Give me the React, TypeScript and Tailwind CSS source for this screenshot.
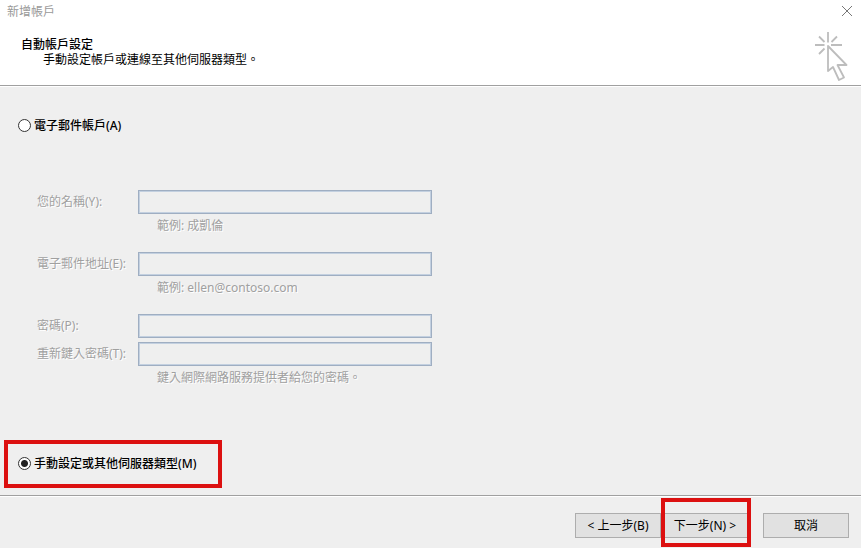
import React from 'react';

const fields = [
  { id: 'name', label: '您的名稱(Y):', type: 'text', hint: '範例: 成凱倫', gap: 'mb-[14px]' },
  { id: 'email', label: '電子郵件地址(E):', type: 'email', hint: '範例: ellen@contoso.com', gap: 'mb-[14px]' },
  { id: 'password', label: '密碼(P):', type: 'password', hint: '', gap: 'mb-1' },
  { id: 'confirm', label: '重新鍵入密碼(T):', type: 'password', hint: '鍵入網際網路服務提供者給您的密碼。', gap: '' },
];

const radioClass =
  'h-[13px] w-[13px] appearance-none rounded-full border border-[#333] bg-white checked:bg-[radial-gradient(circle,#222_0_3px,#fff_4px)]';

const buttonClass =
  'h-[25px] w-[86px] border border-[#adadad] bg-[#e1e1e1] text-xs text-black hover:border-[#0078d7] hover:bg-[#e5f1fb]';

function WizardIcon() {
  return (
    <svg width="34" height="50" viewBox="0 0 34 50" fill="none" stroke="#bdbdbd" strokeWidth="1.8" aria-hidden="true">
      <path d="M13 0v10.500M0 13h9.500M16 13h11M4 4.500l5.500 5.500M22 4.500l-5.500 5.500M4 22l5.500-5.500" />
      <path d="M13 14v25l5-4 6 13 5-2.500-6.500-12.500h9z" strokeLinejoin="round" />
    </svg>
  );
}

function Highlight({ className }: { className: string }) {
  return <span className={`pointer-events-none absolute border-4 border-[#dc1010] ${className}`} />;
}

function Header() {
  return (
    <header className="border-b border-[#a0a0a0] bg-white">
      <div className="flex h-[22px] items-center justify-between pl-[7px] pr-2">
        <span className="pt-px leading-4 text-[#999]">新增帳戶</span>
        <button type="button" aria-label="關閉" className="text-[#777]">
          <svg width="12" height="12" viewBox="0 0 12 12" fill="none" stroke="currentColor">
            <path d="M1 1l10 10M11 1L1 11" />
          </svg>
        </button>
      </div>
      <div className="flex h-[63px] items-start justify-between pl-[21px] pr-3 pt-[10px]">
        <div className="pt-[5px] leading-[15px]">
          <h1 className="font-medium">自動帳戶設定</h1>
          <p className="pl-[22px]">手動設定帳戶或連線至其他伺服器類型。</p>
        </div>
        <WizardIcon />
      </div>
    </header>
  );
}

function AccountFields() {
  return (
    <div className="mt-[55px] pl-[19px] text-[#a0a0a0] [text-shadow:1px_1px_0_#fff]">
      {fields.map((field) => (
        <div key={field.id} className={field.gap}>
          <div className="flex items-center">
            <label htmlFor={field.id} className="w-[101px] shrink-0">
              {field.label}
            </label>
            <input
              id={field.id}
              type={field.type}
              disabled
              className="h-6 w-full max-w-[294px] border border-[#9faec2] bg-[#efefef] px-1 shadow-[inset_0_0_0_1px_#c3d0e0]"
            />
          </div>
          {field.hint && <p className="pl-[120px] leading-6">{field.hint}</p>}
        </div>
      ))}
    </div>
  );
}

export default function App() {
  return (
    <div className="flex min-h-screen flex-col bg-[#efefef] font-['Noto_Sans','Noto_Sans_CJK_TC',sans-serif] text-xs text-black">
      <Header />
      <main className="flex-1 border-t border-white px-[18px] pb-[22px] pt-7">
        <label className="flex h-5 w-fit items-center gap-[3px] font-medium">
          <input type="radio" name="mode" className={radioClass} />
          <span className="pt-px">電子郵件帳戶(A)</span>
        </label>
        <AccountFields />
        <div className="relative mt-[63px] w-fit">
          <label className="flex h-5 items-center gap-[3px] font-medium">
            <input type="radio" name="mode" defaultChecked className={radioClass} />
            <span className="pt-px">手動設定或其他伺服器類型(M)</span>
          </label>
          <Highlight className="-bottom-[15px] -left-[14px] -right-[25px] -top-[13px]" />
        </div>
      </main>
      <footer className="border-t border-[#a0a0a0]">
        <div className="flex justify-end gap-[15px] border-t border-white pb-[10px] pr-3 pt-4">
          <div className="flex gap-px">
            <button type="button" className={buttonClass}>&lt; 上一步(B)</button>
            <div className="relative">
              <button type="button" className={buttonClass}>下一步(N) &gt;</button>
              <Highlight className="-bottom-[9px] -left-px -right-[3px] -top-[15px]" />
            </div>
          </div>
          <button type="button" className={buttonClass}>取消</button>
        </div>
      </footer>
    </div>
  );
}
